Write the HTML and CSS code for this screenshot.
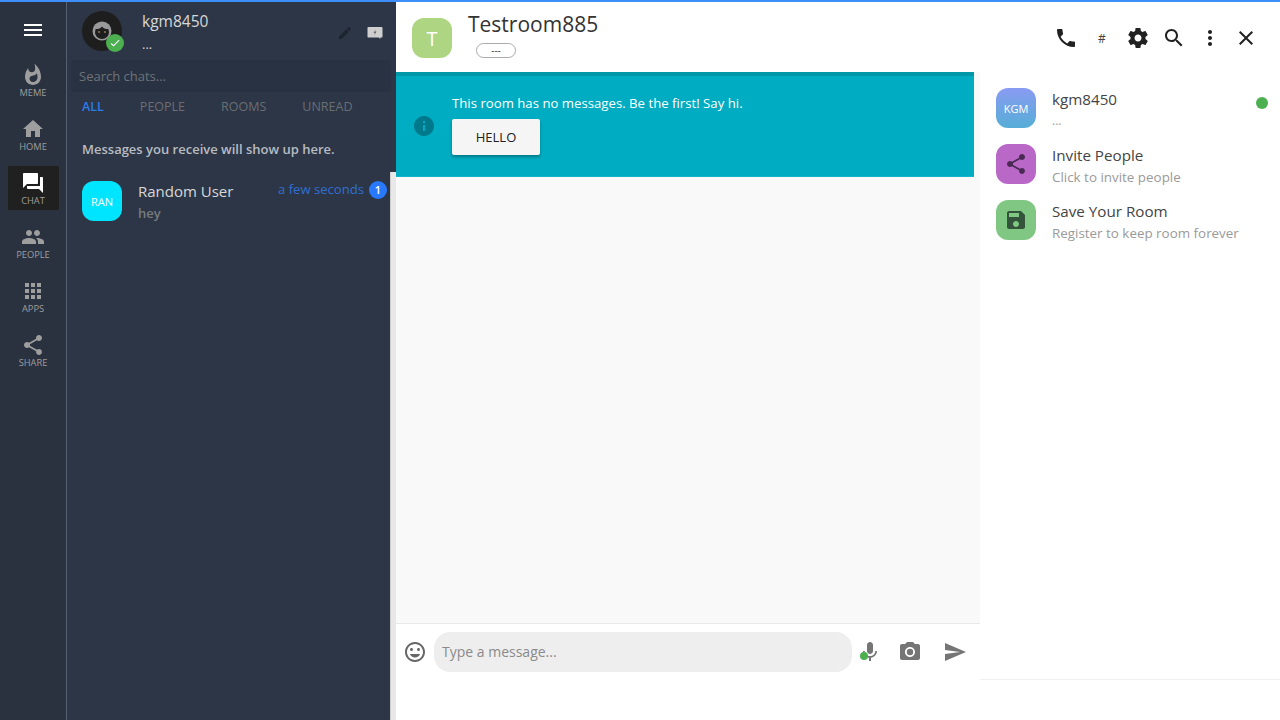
FILE: index.html
```html
<!DOCTYPE html>
<html lang="en">
<head>
<meta charset="utf-8">
<title>Testroom885</title>
<link rel="stylesheet" href="styles.css">
</head>
<body>
<div class="topline"></div>
<div class="app">
  <nav class="nav">
    <div class="burger"><svg class="ic24" viewBox="0 0 24 24"><path d="M3 18h18v-2H3v2zm0-5h18v-2H3v2zm0-7v2h18V6H3z"/></svg></div>
    <div class="nav-item"><svg viewBox="0 0 24 24"><path d="M13.5.67s.74 2.65.74 4.8c0 2.06-1.35 3.73-3.41 3.73-2.07 0-3.63-1.67-3.63-3.73l.03-.36C5.21 7.51 4 10.62 4 14c0 4.42 3.58 8 8 8s8-3.58 8-8C20 8.61 17.41 3.8 13.5.67zM11.71 19c-1.78 0-3.22-1.4-3.22-3.14 0-1.62 1.05-2.76 2.81-3.12 1.77-.36 3.6-1.21 4.62-2.58.39 1.29.59 2.65.59 4.04 0 2.65-2.15 4.8-4.8 4.8z"/></svg><span>MEME</span></div>
    <div class="nav-item"><svg viewBox="0 0 24 24"><path d="M10 20v-6h4v6h5v-8h3L12 3 2 12h3v8z"/></svg><span>HOME</span></div>
    <div class="nav-item active"><svg viewBox="0 0 24 24"><path d="M21 6h-2v9H6v2c0 .55.45 1 1 1h11l4 4V7c0-.55-.45-1-1-1zm-4 6V3c0-.55-.45-1-1-1H3c-.55 0-1 .45-1 1v14l4-4h10c.55 0 1-.45 1-1z"/></svg><span>CHAT</span></div>
    <div class="nav-item"><svg viewBox="0 0 24 24"><path d="M16 11c1.66 0 2.99-1.34 2.99-3S17.66 5 16 5c-1.66 0-3 1.34-3 3s1.34 3 3 3zm-8 0c1.66 0 2.99-1.34 2.99-3S9.66 5 8 5C6.34 5 5 6.34 5 8s1.34 3 3 3zm0 2c-2.33 0-7 1.17-7 3.5V19h14v-2.5c0-2.33-4.67-3.5-7-3.5zm8 0c-.29 0-.62.02-.97.05 1.16.84 1.97 1.97 1.97 3.45V19h6v-2.5c0-2.33-4.67-3.5-7-3.5z"/></svg><span>PEOPLE</span></div>
    <div class="nav-item"><svg viewBox="0 0 24 24"><path d="M4 8h4V4H4v4zm6 12h4v-4h-4v4zm-6 0h4v-4H4v4zm0-6h4v-4H4v4zm6 0h4v-4h-4v4zm6-10v4h4V4h-4zm-6 4h4V4h-4v4zm6 6h4v-4h-4v4zm0 6h4v-4h-4v4z"/></svg><span>APPS</span></div>
    <div class="nav-item"><svg viewBox="0 0 24 24"><path d="M18 16.08c-.76 0-1.44.3-1.96.77L8.91 12.7c.05-.23.09-.46.09-.7s-.04-.47-.09-.7l7.05-4.11c.54.5 1.25.81 2.04.81 1.66 0 3-1.34 3-3s-1.34-3-3-3-3 1.34-3 3c0 .24.04.47.09.7L8.04 9.81C7.5 9.31 6.79 9 6 9c-1.66 0-3 1.34-3 3s1.34 3 3 3c.79 0 1.5-.31 2.04-.81l7.12 4.16c-.05.21-.08.43-.08.65 0 1.61 1.31 2.92 2.92 2.92 1.61 0 2.92-1.31 2.92-2.92s-1.31-2.92-2.92-2.92z"/></svg><span>SHARE</span></div>
  </nav>

  <aside class="list">
    <header class="me">
      <div class="me-avatar">
        <svg class="face" viewBox="0 0 24 24"><circle cx="12" cy="12" r="9.5" fill="#9a9a9a"/><path d="M5 13a7 7 0 0 1 14 0c0 3.9-3.1 7-7 7s-7-3.100-7-7z" fill="#1e1e1e"/><path d="M5.500 10c2 .3 5-.4 6.500-2.500 1.500 2.100 4.500 2.800 6.500 2.500-.8-3-3.300-5-6.500-5s-5.700 2-6.500 5z" fill="#9a9a9a"/><circle cx="9" cy="13" r="1" fill="#8a7a50"/><circle cx="15" cy="13" r="1" fill="#8a7a50"/></svg>
        <span class="me-badge"><svg viewBox="0 0 24 24"><path d="M9 16.170 4.830 12l-1.420 1.410L9 19 21 7l-1.410-1.410z"/></svg></span>
      </div>
      <div class="me-text"><div class="me-name">kgm8450</div><div class="me-sub">...</div></div>
      <div class="me-tools">
        <svg class="tool-edit" viewBox="0 0 24 24"><path d="M3 17.250V21h3.750L17.810 9.940l-3.750-3.750L3 17.250zM20.710 7.040c.39-.39.39-1.020 0-1.410l-2.340-2.340c-.39-.39-1.020-.39-1.410 0l-1.830 1.830 3.750 3.750 1.830-1.830z"/></svg>
        <svg class="tool-flash" viewBox="0 0 24 24"><path d="M3 4h18c.6 0 1 .4 1 1v12c0 .6-.4 1-1 1h-2v2l-2-2H3c-.6 0-1-.4-1-1V5c0-.6.4-1 1-1z" fill="#cfcfcf"/><path d="M13 6.500l-3 5.500h2l-1 3.500 3-5.500h-2z" fill="#6a6a6a"/></svg>
      </div>
    </header>
    <input class="search" type="text" placeholder="Search chats...">
    <div class="tabs"><span class="tab on">ALL</span><span class="tab">PEOPLE</span><span class="tab">ROOMS</span><span class="tab">UNREAD</span></div>
    <p class="hint">Messages you receive will show up here.</p>
    <div class="chat-row">
      <div class="av av-cyan">RAN</div>
      <div class="chat-text"><div class="chat-name">Random User</div><div class="chat-msg">hey</div></div>
      <div class="chat-meta"><span class="chat-time">a few seconds</span><span class="count">1</span></div>
    </div>
  </aside>

  <main class="main">
    <header class="room">
      <div class="av av-green">T</div>
      <div class="room-text"><div class="room-name">Testroom885</div><div class="chip">---</div></div>
      <div class="room-tools">
        <svg viewBox="0 0 24 24"><path d="M6.620 10.790c1.440 2.830 3.760 5.140 6.590 6.590l2.200-2.200c.27-.27.67-.36 1.020-.24 1.120.37 2.330.57 3.570.57.55 0 1 .45 1 1V20c0 .55-.45 1-1 1-9.390 0-17-7.610-17-17 0-.55.45-1 1-1h3.500c.55 0 1 .45 1 1 0 1.250.2 2.450.57 3.570.11.35.03.74-.25 1.020l-2.200 2.200z"/></svg>
        <span class="hash">#</span>
        <svg viewBox="0 0 24 24"><path d="M19.430 12.980c.04-.32.07-.64.07-.98s-.03-.66-.07-.98l2.110-1.650c.19-.15.24-.42.12-.64l-2-3.460c-.12-.22-.39-.3-.61-.22l-2.490 1c-.52-.4-1.080-.73-1.690-.98l-.38-2.650C14.460 2.180 14.250 2 14 2h-4c-.25 0-.46.18-.49.42l-.38 2.650c-.61.25-1.170.59-1.690.98l-2.490-1c-.23-.09-.49 0-.61.22l-2 3.460c-.13.22-.07.49.12.64l2.110 1.650c-.04.32-.07.65-.07.98s.03.66.07.98l-2.110 1.650c-.19.15-.24.42-.12.64l2 3.460c.12.22.39.3.61.22l2.490-1c.52.4 1.080.73 1.690.98l.38 2.650c.03.24.24.42.49.42h4c.25 0 .46-.18.49-.42l.38-2.650c.61-.25 1.170-.59 1.690-.98l2.490 1c.23.09.49 0 .61-.22l2-3.460c.12-.22.07-.49-.12-.64l-2.110-1.650zM12 15.500c-1.930 0-3.500-1.570-3.500-3.500s1.570-3.500 3.500-3.500 3.500 1.570 3.500 3.500-1.570 3.500-3.500 3.500z"/></svg>
        <svg viewBox="0 0 24 24"><path d="M15.500 14h-.79l-.28-.27C15.410 12.590 16 11.110 16 9.500 16 5.910 13.090 3 9.500 3S3 5.910 3 9.500 5.910 16 9.500 16c1.610 0 3.090-.59 4.230-1.570l.27.28v.79l5 4.990L20.490 19l-4.990-5zm-6 0C7.010 14 5 11.990 5 9.500S7.010 5 9.500 5 14 7.010 14 9.500 11.990 14 9.500 14z"/></svg>
        <svg viewBox="0 0 24 24"><path d="M12 8c1.100 0 2-.9 2-2s-.9-2-2-2-2 .9-2 2 .9 2 2 2zm0 2c-1.100 0-2 .9-2 2s.9 2 2 2 2-.9 2-2-.9-2-2-2zm0 6c-1.100 0-2 .9-2 2s.9 2 2 2 2-.9 2-2-.9-2-2-2z"/></svg>
        <svg viewBox="0 0 24 24"><path d="M19 6.410L17.590 5 12 10.590 6.410 5 5 6.410 10.590 12 5 17.590 6.410 19 12 13.410 17.590 19 19 17.590 13.410 12z"/></svg>
      </div>
    </header>
    <div class="body">
      <section class="conv">
        <div class="feed">
          <div class="banner">
            <svg class="info" viewBox="0 0 24 24"><path d="M12 2C6.480 2 2 6.480 2 12s4.480 10 10 10 10-4.480 10-10S17.520 2 12 2zm1 15h-2v-6h2v6zm0-8h-2V7h2v2z"/></svg>
            <div class="banner-text"><p>This room has no messages. Be the first! Say hi.</p><button class="hello" type="button">HELLO</button></div>
          </div>
        </div>
        <div class="composer">
          <svg class="c-smile" viewBox="0 0 24 24"><path d="M11.990 2C6.470 2 2 6.480 2 12s4.470 10 9.990 10C17.520 22 22 17.520 22 12S17.520 2 11.990 2zM12 20c-4.420 0-8-3.580-8-8s3.580-8 8-8 8 3.580 8 8-3.580 8-8 8zm3.500-9c.83 0 1.500-.67 1.500-1.500S16.330 8 15.500 8 14 8.670 14 9.500s.67 1.500 1.500 1.500zm-7 0c.83 0 1.500-.67 1.500-1.500S9.330 8 8.500 8 7 8.670 7 9.500 7.670 11 8.500 11zm3.500 6.500c2.330 0 4.310-1.460 5.110-3.500H6.890c.8 2.040 2.780 3.500 5.110 3.500z"/></svg>
          <input class="msg" type="text" placeholder="Type a message...">
          <div class="c-mic"><svg viewBox="0 0 24 24"><path d="M12 14c1.660 0 2.990-1.340 2.990-3L15 5c0-1.660-1.340-3-3-3S9 3.340 9 5v6c0 1.660 1.340 3 3 3zm5.300-3c0 3-2.540 5.100-5.300 5.100S6.700 14 6.700 11H5c0 3.410 2.720 6.230 6 6.720V21h2v-3.280c3.280-.48 6-3.300 6-6.720h-1.700z"/></svg><span class="mic-dot"></span></div>
          <svg class="c-cam" viewBox="0 0 24 24"><path d="M12 15.200a3.200 3.200 0 1 0 0-6.400 3.200 3.200 0 0 0 0 6.400z"/><path d="M9 2L7.170 4H4c-1.100 0-2 .9-2 2v12c0 1.100.9 2 2 2h16c1.100 0 2-.9 2-2V6c0-1.100-.9-2-2-2h-3.170L15 2H9zm3 15c-2.760 0-5-2.240-5-5s2.240-5 5-5 5 2.240 5 5-2.240 5-5 5z"/></svg>
          <svg class="c-send" viewBox="0 0 24 24"><path d="M2.010 21L23 12 2.010 3 2 10l15 2-15 2z"/></svg>
        </div>
      </section>
      <aside class="side">
        <div class="side-row">
          <div class="av av-kgm">KGM</div>
          <div class="side-text"><div class="side-name">kgm8450</div><div class="side-sub dots">...</div></div>
          <span class="online"></span>
        </div>
        <div class="side-row">
          <div class="av av-purple"><svg viewBox="0 0 24 24"><path d="M18 16.080c-.76 0-1.440.3-1.960.77L8.910 12.700c.05-.23.09-.46.09-.7s-.04-.47-.09-.7l7.050-4.110c.54.5 1.250.81 2.040.81 1.660 0 3-1.340 3-3s-1.340-3-3-3-3 1.340-3 3c0 .24.04.47.09.7L8.040 9.810C7.500 9.310 6.790 9 6 9c-1.660 0-3 1.340-3 3s1.340 3 3 3c.79 0 1.500-.31 2.040-.81l7.120 4.160c-.05.21-.08.43-.08.65 0 1.610 1.310 2.920 2.920 2.920 1.610 0 2.920-1.310 2.920-2.920s-1.310-2.920-2.920-2.920z"/></svg></div>
          <div class="side-text"><div class="side-name">Invite People</div><div class="side-sub">Click to invite people</div></div>
        </div>
        <div class="side-row">
          <div class="av av-save"><svg viewBox="0 0 24 24"><path d="M17 3H5c-1.110 0-2 .9-2 2v14c0 1.100.89 2 2 2h14c1.100 0 2-.9 2-2V7l-4-4zm-5 16c-1.660 0-3-1.340-3-3s1.340-3 3-3 3 1.340 3 3-1.340 3-3 3zm3-10H5V5h10v4z"/></svg></div>
          <div class="side-text"><div class="side-name">Save Your Room</div><div class="side-sub">Register to keep room forever</div></div>
        </div>
      </aside>
    </div>
  </main>
</div>
</body>
</html>
```
FILE: styles.css
```css
* { box-sizing: border-box; }
html, body { margin: 0; height: 100%; overflow: hidden; }
body { font-family: "Open Sans", "Noto Sans", sans-serif; background: #fff; color: #333; display: flex; flex-direction: column; }
p { margin: 0; }
svg { display: block; }

.topline { height: 2px; background: #3d8ef8; flex: none; }
.app { flex: 1; display: flex; min-height: 0; }

/* left rail */
.nav { width: 67px; flex: none; background: #2a3240; border-right: 1px solid #566070; display: flex; flex-direction: column; align-items: center; }
.burger { height: 56px; display: flex; align-items: center; justify-content: center; fill: #fff; }
.ic24 { width: 24px; height: 24px; }
.nav-item { width: 51px; height: 44px; margin-bottom: 10px; padding-top: 5px; display: flex; flex-direction: column; align-items: center; color: #9e9e9e; fill: #9e9e9e; font-size: 9.3px; line-height: 12px; }
.nav-item svg { width: 24px; height: 24px; }
.nav-item.active { background: #202020; fill: #fff; }

/* chat list */
.list { width: 329px; flex: none; background: #2d3646; position: relative; }
.list::after { content: ""; position: absolute; right: 0; top: 170px; bottom: 0; width: 5px; background: #e8e8e8; border-left: 1px solid #cfcfcf; }
.me { height: 58px; padding: 9px 0 0 15px; display: flex; }
.me-avatar { width: 40px; height: 40px; border-radius: 50%; background: #1e1e1e; position: relative; display: flex; align-items: center; justify-content: center; }
.face { width: 24px; height: 24px; }
.me-badge { position: absolute; right: -2px; bottom: -1px; width: 18px; height: 18px; border-radius: 50%; background: #4caf50; fill: #fff; display: flex; align-items: center; justify-content: center; }
.me-badge svg { width: 12px; height: 12px; }
.me-text { margin-left: 20px; }
.me-name { font-size: 15.5px; line-height: 20px; color: #d8d8d8; }
.me-sub { font-size: 13px; line-height: 20px; margin-top: 3px; color: #d0d0d0; }
.me-tools { margin-left: auto; margin-right: 12px; padding-top: 13px; display: flex; gap: 13px; align-items: flex-start; }
.tool-edit { width: 16px; height: 16px; margin-top: 1px; fill: #1c2430; }
.tool-flash { width: 18px; height: 18px; }

.search { display: block; width: 320px; height: 32px; margin-left: 4px; padding: 0 8px; background: #293242; border: 0; border-radius: 4px; font: 13px "Open Sans", sans-serif; color: #ccc; outline: 0; }
.search::placeholder { color: #6f7378; opacity: 1; }
.tabs { margin-top: 4px; padding-left: 15px; display: flex; gap: 36px; height: 20px; align-items: center; font-size: 12.5px; font-weight: 500; color: #6a6e74; }
.tab.on { color: #2a7de8; font-weight: 600; }
.hint { margin: 24px 0 0 15px; font-size: 13px; font-weight: 600; line-height: 18px; color: #b8bcc2; }
.chat-row { margin: 23px 0 0 15px; display: flex; position: relative; width: 305px; height: 40px; }
.av { width: 40px; height: 40px; border-radius: 12px; flex: none; display: flex; align-items: center; justify-content: center; color: #fff; }
.av-cyan { background: #00e5ff; font-size: 11px; font-weight: 500; }
.chat-text { margin-left: 16px; }
.chat-name { font-size: 15px; font-weight: 500; line-height: 20px; color: #d8d8d8; }
.chat-msg { font-size: 13px; font-weight: 600; line-height: 18px; margin-top: 3px; color: #777b80; }
.chat-meta { margin-left: auto; display: flex; gap: 5px; align-items: flex-start; }
.chat-time { font-size: 13.1px; line-height: 17px; color: #2f6fd0; }
.count { width: 18px; height: 18px; border-radius: 50%; background: #2979ff; color: #fff; font-size: 11px; font-weight: 600; line-height: 18px; text-align: center; }

/* main column */
.main { flex: 1; min-width: 0; display: flex; flex-direction: column; padding-bottom: 40px; background: #fff; }
.room { height: 70px; flex: none; display: flex; padding: 16px 22px 0 16px; }
.av-green { background: #aed581; font-size: 20px; }
.room-text { margin-left: 16px; margin-top: -7px; }
.room-name { font-size: 21px; line-height: 26px; color: #333; }
.chip { margin: 6px 0 0 8px; width: 40px; height: 15px; border: 1px solid #aaa; border-radius: 8px; font-size: 10px; line-height: 12px; text-align: center; color: #444; }
.room-tools { margin-left: auto; height: 40px; display: flex; align-items: center; gap: 12px; fill: #212121; }
.room-tools svg { width: 24px; height: 24px; }
.hash { width: 24px; text-align: center; font-size: 12px; color: #444; }

.body { flex: 1; display: flex; min-height: 0; }
.conv { width: 584px; flex: none; display: flex; flex-direction: column; }
.feed { flex: 1; background: #f9f9f9; padding-right: 6px; border-bottom: 1px solid #e8e8e8; }
.banner { height: 105px; background: #00acc1; border-top: 4px solid #0097a7; border-bottom: 1px solid #12b6ca; display: flex; align-items: center; padding-left: 16px; }
.info { width: 24px; height: 24px; fill: #00798c; flex: none; }
.banner-text { margin: -4px 0 0 16px; }
.banner-text p { font-size: 13.2px; line-height: 18px; color: #fff; }
.hello { display: block; margin-top: 7px; width: 88px; height: 36px; background: #f5f5f5; border: 0; border-radius: 2px; box-shadow: 0 2px 3px rgba(0,0,0,.3); font: 13px "Open Sans", sans-serif; color: #212121; padding: 0; }
.composer { height: 56px; flex: none; display: flex; align-items: center; padding: 0 0 0 7px; background: #fff; }
.c-smile { width: 24px; height: 24px; fill: #666; flex: none; }
.msg { width: 418px; height: 40px; margin-left: 7px; padding: 0 8px 2px; background: #eee; border: 0; border-radius: 16px; font: 14px "Open Sans", sans-serif; color: #333; outline: 0; }
.msg::placeholder { color: #8a8a8a; opacity: 1; }
.c-mic { position: relative; width: 24px; height: 24px; margin-left: 6px; fill: #757575; }
.c-mic svg { width: 24px; height: 24px; }
.mic-dot { position: absolute; left: 2px; top: 12px; width: 8px; height: 8px; border-radius: 50%; background: #4caf50; }
.c-cam { width: 24px; height: 24px; margin-left: 16px; fill: #757575; }
.c-send { width: 24px; height: 24px; margin-left: 21px; fill: #757575; }

.side { flex: 1; padding-top: 16px; border-bottom: 1px solid #f0f0f0; background: #fff; }
.side-row { height: 40px; margin: 0 12px 16px 16px; display: flex; position: relative; }
.side-text { margin-left: 16px; padding-top: 1px; }
.side-name { font-size: 15.2px; line-height: 20px; color: #444; }
.side-sub { font-size: 13.4px; line-height: 18px; margin-top: 3px; color: #9a9a9a; }
.side-sub.dots { font-size: 12px; margin-top: 3px; }
.online { margin-left: auto; margin-top: 9px; width: 12px; height: 12px; border-radius: 50%; background: #4caf50; }
.av-kgm { background: linear-gradient(180deg, #8a9bf2, #55aed6); font-size: 11px; font-weight: 500; }
.av-purple { background: #ba68c8; fill: #4a2a55; }
.av-save { background: #81c784; fill: #33533a; }
.av svg { width: 24px; height: 24px; }
```
